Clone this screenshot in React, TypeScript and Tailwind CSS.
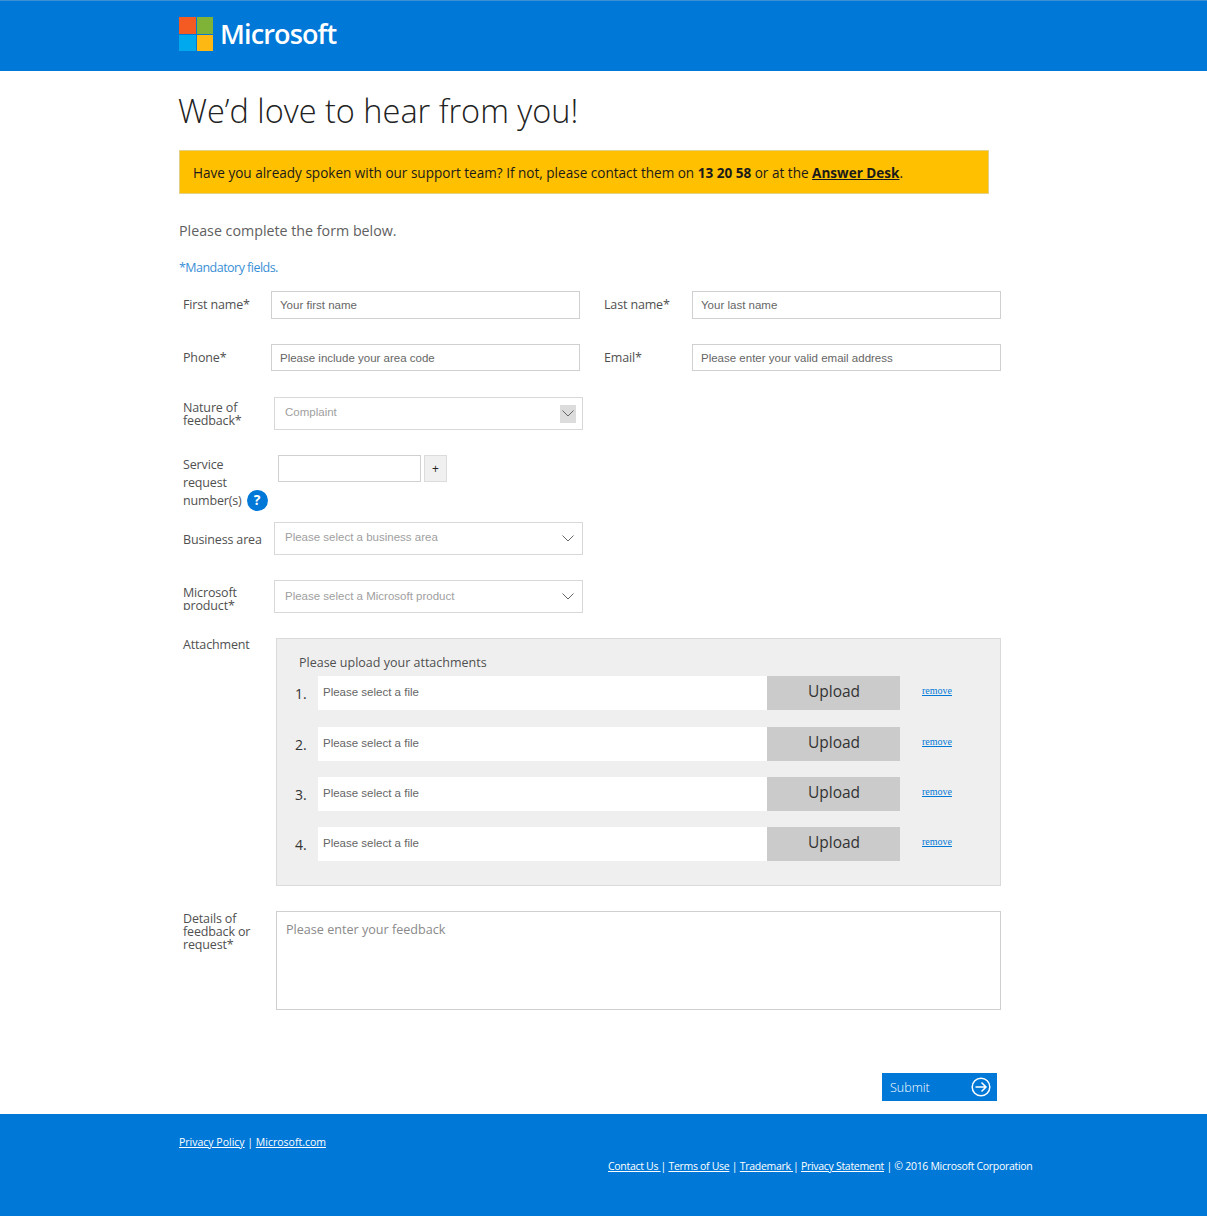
const sans = "font-['Open_Sans','Noto_Sans',sans-serif]";

const Label = ({ children, className = "" }: { children: React.ReactNode; className?: string }) => (
  <div className={`text-[12.5px] tracking-[-0.15px] text-[#505050] ${className}`}>{children}</div>
);

const TextField = ({ label, placeholder }: { label: string; placeholder: string }) => (
  <div className="flex w-[421px] shrink-0">
    <Label className="w-[92px] shrink-0 pt-px pl-1 leading-[26px]">{label}</Label>
    <input
      placeholder={placeholder}
      className="h-full w-[309px] border border-[#d0d0d0] bg-white px-2 font-['Liberation_Sans',sans-serif] text-[11.5px] placeholder:text-[#666]"
    />
  </div>
);

const Chevron = () => (
  <svg width="12" height="7" viewBox="0 0 12 7" fill="none" stroke="#666" strokeWidth="1">
    <path d="M0.5 0.5L6 6L11.5 0.5" />
  </svg>
);

const SelectBox = ({ text, shaded, offset = "-mt-[2px]" }: { text: string; shaded?: boolean; offset?: string }) => (
  <div className="ml-[3px] flex h-full w-[309px] items-center justify-between border border-[#d8d8d8] bg-white pl-[10px] pr-2 font-['Liberation_Sans',sans-serif] text-[11.5px] text-[#a0a0a0]">
    <span className={offset}>{text}</span>
    {shaded ? (
      <span className="-mr-0.5 flex h-[18px] w-4 items-center justify-center bg-[#dcdcdc]">
        <Chevron />
      </span>
    ) : (
      <Chevron />
    )}
  </div>
);

const UploadRow = ({ n, className = "" }: { n: number; className?: string }) => (
  <div className={`flex h-[34px] items-center ${className}`}>
    <span className="w-[41px] pl-[18px] text-[14px] text-[#333]">{n}.</span>
    <div className="flex h-full w-[449px] items-center bg-white pl-[5px] font-['Liberation_Sans',sans-serif] text-[11.5px] text-[#666]">
      Please select a file
    </div>
    <div className="flex h-full w-[133px] items-center justify-center bg-[#cbcbcb] pb-[2px] pl-px text-[15.5px] text-[#333]">
      Upload
    </div>
    <a className="ml-[22px] -mt-[6px] font-['Liberation_Serif',serif] text-[10px] text-[#0078d7] underline">remove</a>
  </div>
);

export default function App() {
  return (
    <div className={`${sans} flex h-[1216px] flex-col bg-white`}>
      <header className="h-[71px] shrink-0 border-t border-[#3d8fd4] bg-[#0078d7] pl-[179px]">
        <div className="flex items-center pt-4">
          <div className="grid h-[34px] w-[34px] grid-cols-2 gap-px">
            <div className="bg-[#f35b22]" />
            <div className="bg-[#7eb338]" />
            <div className="bg-[#00a8ee]" />
            <div className="bg-[#fdb813]" />
          </div>
          <span className="ml-[7px] text-[27px] leading-[34px] font-semibold tracking-[-0.85px] text-white">Microsoft</span>
        </div>
      </header>

      <main className="flex-1 pl-[179px]">
        <h1 className="-ml-px mt-5 text-[32.5px] leading-10 font-light text-[#222]">We’d love to hear from you!</h1>

        <div className="mt-[19px] flex h-11 w-[810px] items-center border border-[#e6cf86] bg-[#ffc000] pt-[2px] pl-[13px] text-[13.55px] text-[#1a1a1a]">
          <span>
            Have you already spoken with our support team? If not, please contact them on <b>13 20 58</b> or at the{" "}
            <b className="underline">Answer Desk</b>.
          </span>
        </div>

        <p className="mt-[27px] text-[14.25px] leading-5 text-[#606060]">Please complete the form below.</p>
        <p className="mt-[18px] text-[12.5px] leading-[18px] tracking-[-0.53px] text-[#3a8fd6]">*Mandatory fields.</p>

        <div className="mt-[14px] flex h-[28px]">
          <TextField label="First name*" placeholder="Your first name" />
          <TextField label="Last name*" placeholder="Your last name" />
        </div>
        <div className="mt-[25px] flex h-[27px]">
          <TextField label="Phone*" placeholder="Please include your area code" />
          <TextField label="Email*" placeholder="Please enter your valid email address" />
        </div>

        <div className="mt-[26px] flex h-[33px]">
          <Label className="w-[92px] pt-1 pl-1 leading-[13px]">
            Nature of
            <br />
            feedback*
          </Label>
          <SelectBox text="Complaint" shaded />
        </div>

        <div className="mt-[25px] flex h-[67px]">
          <Label className="w-[99px] pt-px pl-1 leading-[18px]">
            Service
            <br />
            request
            <div className="flex h-[18px] items-center">
              number(s)
              <span className="ml-[5px] -mt-[2px] flex h-[21px] w-[21px] shrink-0 items-center justify-center rounded-full bg-[#0078d7] text-[14px] font-bold tracking-normal text-white">
                ?
              </span>
            </div>
          </Label>
          <div className="flex h-[27px]">
            <input className="h-full w-[143px] border border-[#d0d0d0] bg-white" />
            <div className="ml-[3px] flex h-full w-[23px] items-center justify-center border border-[#dcdcdc] bg-[#f0f0f0] text-[12px] text-[#222]">
              +
            </div>
          </div>
        </div>

        <div className="flex h-[33px]">
          <Label className="w-[92px] pt-[9px] pl-1 leading-[18px] whitespace-nowrap">Business area</Label>
          <SelectBox text="Please select a business area" />
        </div>

        <div className="mt-[25px] flex h-[33px]">
          <Label className="h-[30px] w-[92px] overflow-hidden pt-[6px] pl-1 leading-[13px]">
            Microsoft
            <br />
            product*
          </Label>
          <SelectBox text="Please select a Microsoft product" offset="" />
        </div>

        <div className="mt-[25px] flex">
          <Label className="w-[97px] pt-px pl-1 leading-[12px]">Attachment</Label>
          <div className="h-[248px] w-[725px] border border-[#dadada] bg-[#efefef]">
            <p className="pt-[15px] pl-[22px] text-[12.5px] leading-[18px] text-[#505050]">Please upload your attachments</p>
            <UploadRow n={1} className="mt-[4px]" />
            <UploadRow n={2} className="mt-[17px]" />
            <UploadRow n={3} className="mt-4" />
            <UploadRow n={4} className="mt-4" />
          </div>
        </div>

        <div className="mt-[25px] flex">
          <Label className="w-[97px] pt-[1px] pl-1 leading-[13px]">
            Details of
            <br />
            feedback or
            <br />
            request*
          </Label>
          <textarea
            placeholder="Please enter your feedback"
            className="h-[99px] w-[725px] resize-none border border-[#cfcfcf] bg-white px-[9px] pt-[9px] text-[12.6px] placeholder:text-[#8a8a8a]"
          />
        </div>

        <button className="mt-[63px] ml-[703px] flex h-7 w-[115px] items-center justify-between bg-[#0078d7] pr-[6px] pl-2 text-[12.5px] font-light text-white">
          <span className="pt-[2px]">Submit</span>
          <svg width="20" height="20" viewBox="0 0 20 20" fill="none" stroke="white" strokeWidth="1.5">
            <circle cx="10" cy="10" r="8.8" />
            <path d="M4.5 10H15M10.5 5.5L15 10L10.5 14.5" />
          </svg>
        </button>
      </main>

      <footer className="h-[102px] shrink-0 bg-[#0078d7] pl-[179px] text-[10.5px] text-white">
        <p className="pt-5 leading-[16px]">
          <a className="underline">Privacy Policy</a> | <a className="underline">Microsoft.com</a>
        </p>
        <p className="mt-2 ml-[429px] leading-[16px] tracking-[-0.3px]">
          <a className="underline">Contact Us </a>| <a className="underline">Terms of Use</a> |{" "}
          <a className="underline">Trademark </a>| <a className="underline">Privacy Statement</a> | © 2016 Microsoft
          Corporation
        </p>
      </footer>
    </div>
  );
}
